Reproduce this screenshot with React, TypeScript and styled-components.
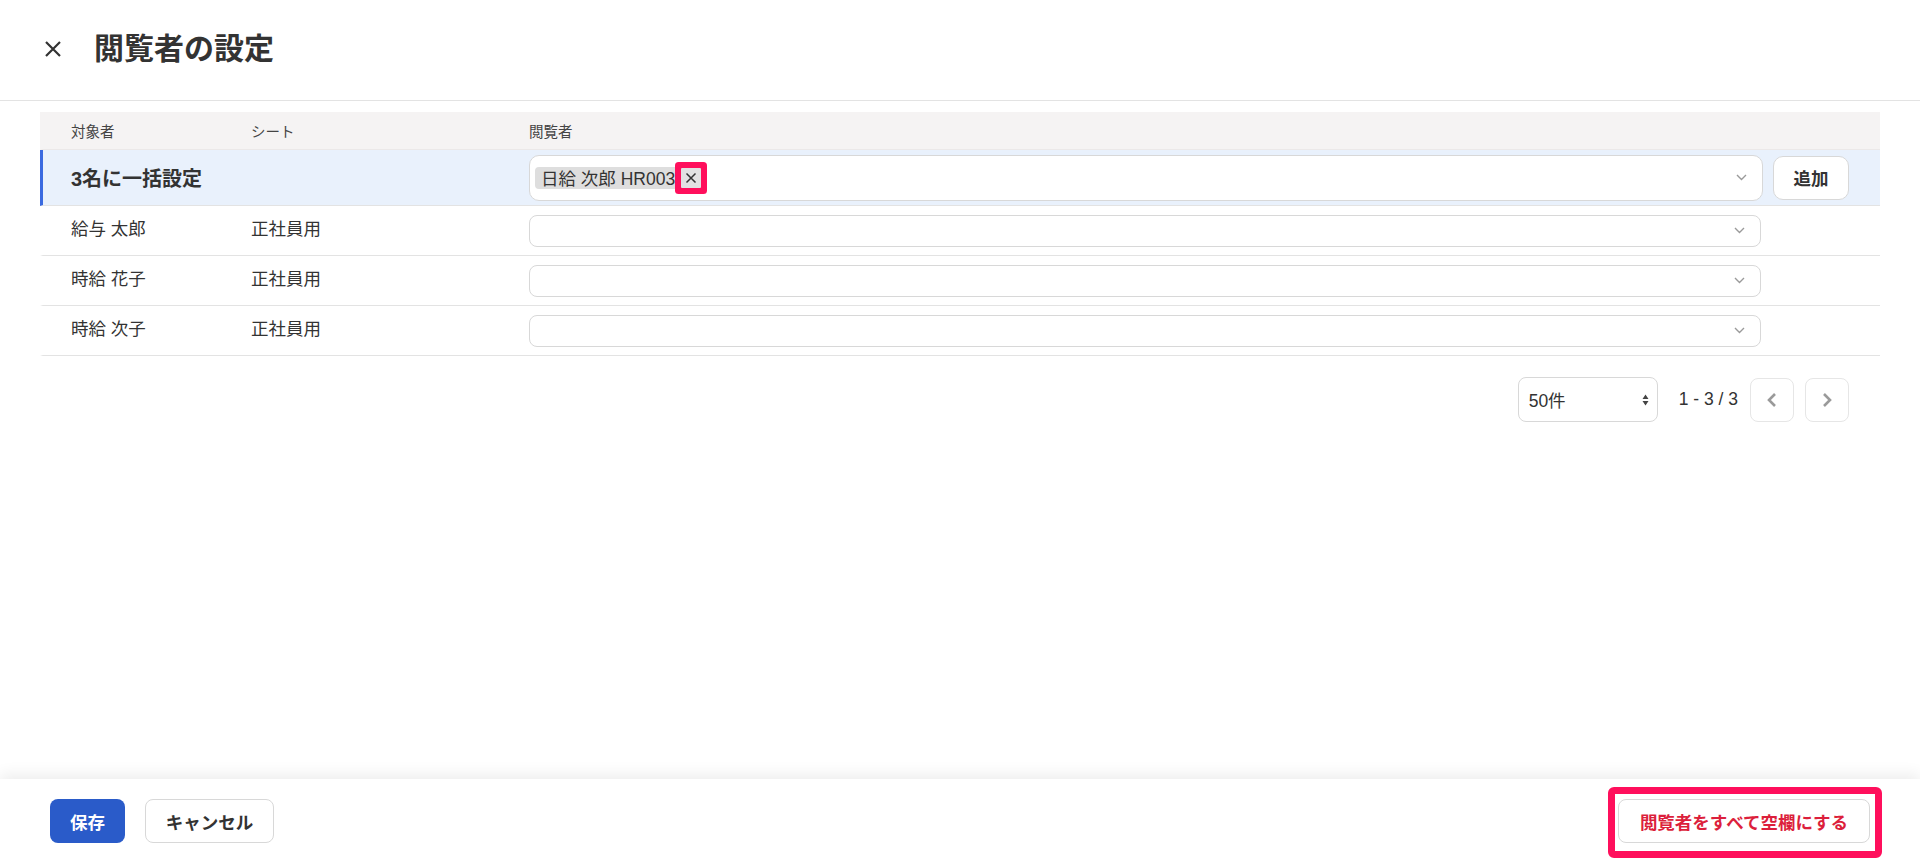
import { createGlobalStyle } from 'styled-components';
import styled from 'styled-components';

const color = {
  text: '#333333',
  sub: '#444444',
  border: '#e3e3e3',
  inputBorder: '#d8d8d8',
  headBg: '#f5f3f3',
  bulkBg: '#e9f1fc',
  blue: '#3a6ae0',
  primary: '#2a5bc9',
  danger: '#dc1f3c',
  mark: '#ff0f5c',
  chevron: '#9a9a9a',
};

type Viewer = { id: number; name: string; sheet: string };

const viewers: Viewer[] = [
  { id: 1, name: '給与 太郎', sheet: '正社員用' },
  { id: 2, name: '時給 花子', sheet: '正社員用' },
  { id: 3, name: '時給 次子', sheet: '正社員用' },
];

const ChevronDown = () => (
  <svg width="11" height="7" viewBox="0 0 11 7" fill="none">
    <path d="M1 1l4.5 4.5L10 1" stroke={color.chevron} strokeWidth="1.4" />
  </svg>
);

const App = () => {
  return (
    <Page>
      <GlobalStyle />
      <Header>
        <CloseButton aria-label="閉じる">
          <svg width="18" height="18" viewBox="0 0 18 18" fill="none">
            <path d="M2 2l14 14M16 2L2 16" stroke="#333" strokeWidth="2.2" />
          </svg>
        </CloseButton>
        <Title>閲覧者の設定</Title>
      </Header>

      <Main>
        <Table>
          <HeadRow>
            <HeadCell>対象者</HeadCell>
            <HeadCell>シート</HeadCell>
            <HeadCell>閲覧者</HeadCell>
            <span />
          </HeadRow>

          <BulkRow>
            <BulkLabel>3名に一括設定</BulkLabel>
            <span />
            <SelectBox large>
              <Chip>
                日給 次郎 HR003
                <RemoveButton aria-label="削除">
                  <svg width="12" height="12" viewBox="0 0 12 12" fill="none">
                    <path d="M1.5 1.5l9 9M10.5 1.5l-9 9" stroke="#333" strokeWidth="1.5" />
                  </svg>
                </RemoveButton>
              </Chip>
              <ChevronDown />
            </SelectBox>
            <AddButton>追加</AddButton>
          </BulkRow>

          {viewers.map(viewer => (
            <Row key={viewer.id}>
              <Cell>{viewer.name}</Cell>
              <Cell>{viewer.sheet}</Cell>
              <SelectBox>
                <span />
                <ChevronDown />
              </SelectBox>
              <span />
            </Row>
          ))}
        </Table>

        <Pagination>
          <PerPage>
            50件
            <svg width="7" height="12" viewBox="0 0 7 12">
              <path d="M3.5 0.5L6.5 5H0.5z M3.5 11.5L0.5 7h6z" fill="#444" />
            </svg>
          </PerPage>
          <PageCount>1 - 3 / 3</PageCount>
          <PageButton aria-label="前へ">
            <svg width="10" height="16" viewBox="0 0 10 16" fill="none">
              <path d="M8 2L2 8l6 6" stroke={color.chevron} strokeWidth="2.6" />
            </svg>
          </PageButton>
          <PageButton aria-label="次へ">
            <svg width="10" height="16" viewBox="0 0 10 16" fill="none">
              <path d="M2 2l6 6-6 6" stroke={color.chevron} strokeWidth="2.6" />
            </svg>
          </PageButton>
        </Pagination>
      </Main>

      <Footer>
        <FooterLeft>
          <SaveButton>保存</SaveButton>
          <CancelButton>キャンセル</CancelButton>
        </FooterLeft>
        <MarkFrame>
          <ClearButton>閲覧者をすべて空欄にする</ClearButton>
        </MarkFrame>
      </Footer>
    </Page>
  );
};

const GlobalStyle = createGlobalStyle`
  * { box-sizing: border-box; }
  html, body { margin: 0; padding: 0; background: #fff; }
  body {
    font-family: "Liberation Sans", "Noto Sans CJK JP", sans-serif;
    color: ${color.text};
  }
  button { font-family: inherit; cursor: pointer; }
`;

const Page = styled.div`
  display: flex;
  flex-direction: column;
  height: 100vh;
  overflow: hidden;
`;

const Header = styled.header`
  display: flex;
  align-items: center;
  gap: 31px;
  height: 101px;
  padding: 0 0 2px 43px;
  border-bottom: 1px solid ${color.border};
  flex-shrink: 0;
`;

const CloseButton = styled.button`
  display: flex;
  align-items: center;
  justify-content: center;
  width: 20px;
  height: 20px;
  padding: 0;
  border: none;
  background: none;
`;

const Title = styled.h1`
  margin: 0;
  font-size: 30px;
  font-weight: 700;
  line-height: 1;
  color: ${color.text};
`;

const Main = styled.main`
  flex: 1;
  padding: 11px 40px 0;
`;

const Table = styled.div`
  display: flex;
  flex-direction: column;
`;

const RowBase = styled.div`
  display: grid;
  grid-template-columns: 180px 278px 1fr 117px;
  align-items: center;
  padding-left: 28px;
  border-left: 3px solid transparent;
  border-bottom: 1px solid ${color.border};
`;

const HeadRow = styled(RowBase)`
  height: 38px;
  background: ${color.headBg};
  border-bottom-color: #ebe8e8;
`;

const HeadCell = styled.div`
  font-size: 14.5px;
  color: ${color.sub};
`;

const BulkRow = styled(RowBase)`
  height: 56px;
  background: ${color.bulkBg};
  border-left-color: ${color.blue};
`;

const BulkLabel = styled.div`
  font-size: 20px;
  font-weight: 700;
`;

const Row = styled(RowBase)`
  height: 50px;
`;

const Cell = styled.div`
  font-size: 17.5px;
  line-height: 1.2;
  padding-bottom: 3px;
`;

const SelectBox = styled.div<{ large?: boolean }>`
  display: flex;
  align-items: center;
  justify-content: space-between;
  height: ${p => (p.large ? '46px' : '32px')};
  margin-right: ${p => (p.large ? '0' : '2px')};
  padding: 0 15px 0 5px;
  background: #fff;
  border: 1px solid ${color.inputBorder};
  border-radius: ${p => (p.large ? '10px' : '8px')};
`;

const Chip = styled.span`
  display: inline-flex;
  align-items: center;
  height: 22px;
  padding-left: 6px;
  background: #dedede;
  border-radius: 4px;
  font-size: 17.5px;
  white-space: nowrap;
`;

const RemoveButton = styled.button`
  display: flex;
  align-items: center;
  justify-content: center;
  width: 20px;
  height: 20px;
  margin-left: 6px;
  padding: 0;
  border: none;
  border-radius: 1px;
  background: #e2e2e2;
  box-shadow: 0 0 0 6px ${color.mark};
`;

const AddButton = styled.button`
  justify-self: start;
  width: 76px;
  height: 44px;
  margin-left: 10px;
  padding: 0;
  background: #fff;
  border: 1px solid ${color.inputBorder};
  border-radius: 10px;
  font-size: 17.5px;
  font-weight: 700;
  color: ${color.text};
`;

const Pagination = styled.div`
  display: flex;
  align-items: center;
  justify-content: flex-end;
  margin-top: 21px;
  padding-right: 31px;
`;

const PerPage = styled.div`
  display: flex;
  align-items: center;
  justify-content: space-between;
  width: 140px;
  height: 45px;
  padding: 0 8px 0 10px;
  border: 1px solid ${color.inputBorder};
  border-radius: 8px;
  font-size: 17.5px;
`;

const PageCount = styled.span`
  margin: 0 12px 0 21px;
  font-size: 17.5px;
`;

const PageButton = styled.button`
  display: flex;
  align-items: center;
  justify-content: center;
  width: 44px;
  height: 44px;
  margin-left: 11px;
  padding: 0;
  background: #fff;
  border: 1px solid #e6e6e6;
  border-radius: 8px;

  &:first-of-type {
    margin-left: 0;
  }
`;

const Footer = styled.footer`
  display: flex;
  align-items: center;
  justify-content: space-between;
  height: 81px;
  padding: 3px 50px 0;
  background: #fff;
  box-shadow: 0 -5px 14px rgba(0, 0, 0, 0.07);
  flex-shrink: 0;
`;

const FooterLeft = styled.div`
  display: flex;
  gap: 20px;
`;

const BaseButton = styled.button`
  height: 44px;
  padding: 0;
  border-radius: 8px;
  font-size: 17.5px;
  font-weight: 700;
`;

const SaveButton = styled(BaseButton)`
  width: 75px;
  background: ${color.primary};
  border: none;
  color: #fff;
`;

const CancelButton = styled(BaseButton)`
  width: 129px;
  background: #fff;
  border: 1px solid ${color.inputBorder};
  color: ${color.text};
`;

/* annotation frame drawn around the clear button */
const MarkFrame = styled.div`
  display: flex;
  margin: -12px -12px -15px -10px;
  padding: 5px 5px 8px 3px;
  border: 7px solid ${color.mark};
  border-radius: 6px;
`;

const ClearButton = styled(BaseButton)`
  width: 252px;
  background: #fff;
  border: 1px solid ${color.inputBorder};
  color: ${color.danger};
`;

export default App;
